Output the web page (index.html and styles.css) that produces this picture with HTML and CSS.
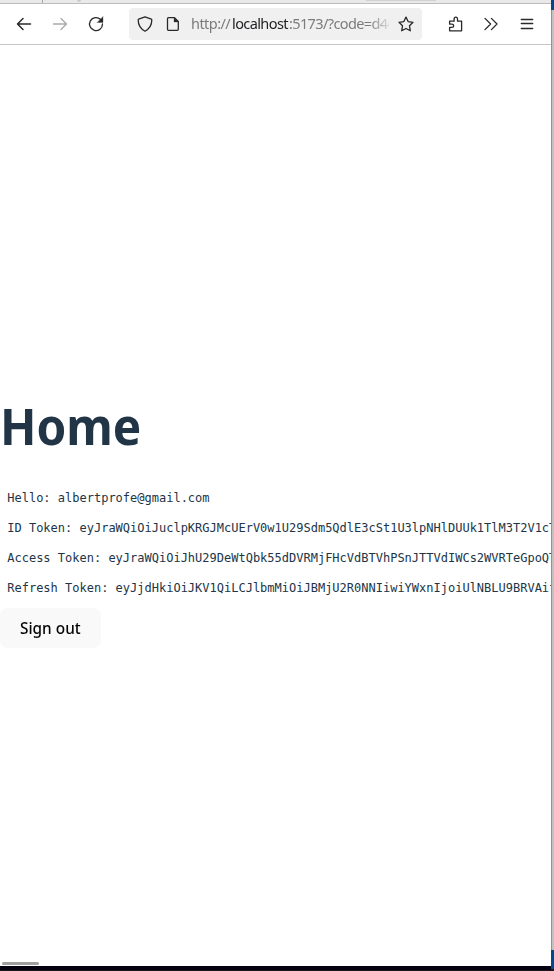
FILE: index.html
```html
<!DOCTYPE html>
<html lang="en">
<head>
<meta charset="utf-8">
<title>Home</title>
<link rel="stylesheet" href="styles.css">
</head>
<body>
<div class="desktop">
  <div class="window">
    <div class="tabs"><i class="tab-divider"></i><i class="tab-mark"></i><i class="tab-button"></i></div>
    <header class="toolbar">
      <svg class="icon back" viewBox="0 0 16 16"><path d="M14.500 8H1.500M7 2.500 1.500 8 7 13.500"/></svg>
      <svg class="icon forward" viewBox="0 0 16 16"><path d="M1.500 8h13M9 2.500 14.500 8 9 13.500"/></svg>
      <svg class="icon reload" viewBox="0 0 16 16"><path d="M12.600 3.500A6.500 6.500 0 1 0 14.500 8"/><path class="solid" d="M15 .8v5.700H9.300z"/></svg>
      <div class="address">
        <svg class="icon shield" viewBox="0 0 16 16"><path d="M8 .9 14.300 3.200q.5.200.5.800C14.800 9 12 13 8 15.200 4 13 1.200 9 1.200 4q0-.6.500-.8z"/></svg>
        <svg class="icon page" viewBox="0 0 16 16"><path d="M3.500 1.700h6L13.300 5.500v7.800q0 1-1 1H3.500q-1 0-1-1V2.700q0-1 1-1z"/><path class="solid" d="M9 1.500V6h4.500z"/></svg>
        <div class="url"><span class="scheme">http://</span><span class="host">localhost</span><span class="path">:5173/?code=d4c</span></div>
        <svg class="icon star" viewBox="0 0 16 16"><path d="m8 1.100 2.100 4.500 4.900.7-3.500 3.500.8 5L8 12.500l-4.300 2.300.8-5L1 6.300l4.900-.7z"/></svg>
      </div>
      <svg class="icon extensions" viewBox="0 0 16 16"><path d="M1.600 14.800h12V5.200H9.500V3.100q0-2-1.700-2T6.100 3.100v2.100H1.600v2.900h2.200q1.900 0 1.900 1.600t-1.900 1.700H1.600z"/></svg>
      <svg class="icon more" viewBox="0 0 16 16"><path d="M2 2.400 7.600 8 2 13.600M8.400 2.400 14 8l-5.600 5.600"/></svg>
      <svg class="icon menu" viewBox="0 0 16 16"><path d="M2.300 3.500h11.400M2.300 7.500h11.400M2.300 12.500h11.400"/></svg>
    </header>
    <main class="content">
      <h1><span>Home</span></h1>
      <pre>Hello: albertprofe@gmail.com</pre>
      <pre>ID Token: eyJraWQiOiJuclpKRGJMcUErV0w1U29Sdm5QdlE3cSt1U3lpNHlDUUk1TlM3T2V1cT</pre>
      <pre>Access Token: eyJraWQiOiJhU29DeWtQbk55dDVRMjFHcVdBTVhPSnJTTVdIWCs2WVRTeGpoQT</pre>
      <pre>Refresh Token: eyJjdHkiOiJKV1QiLCJlbmMiOiJBMjU2R0NNIiwiYWxnIjoiUlNBLU9BRVAif</pre>
      <button type="button"><span>Sign out</span></button>
    </main>
    <div class="scrollbar"></div>
    <div class="bottom"></div>
  </div>
  <aside class="edge"></aside>
</div>
</body>
</html>
```
FILE: styles.css
```css
* { box-sizing: border-box; }
body { margin: 0; width: 554px; height: 971px; overflow: hidden; background: #fff; font-family: "Noto Sans", sans-serif; }
.desktop { display: flex; height: 971px; }
.window { width: 551px; height: 971px; display: flex; flex-direction: column; overflow: hidden; }
.edge { width: 3px; background: linear-gradient(#00498f 0 10px, transparent 10px 950px, #004a90 950px 969px, #17171c 969px), linear-gradient(90deg, #929292 1px, #c2c2c2 1px); }
.tabs { height: 4px; display: flex; flex: none; background: #e9e9e9; border-bottom: 1px solid #bdbdbd; }
.tab-divider { width: 1px; height: 3px; margin-left: 42px; background: #aaa; }
.tab-mark { width: 4px; height: 2px; margin-left: 34px; background: #ccc; border-radius: 0 0 2px 2px; }
.tab-button { width: 70px; height: 1px; margin-left: 285px; background: #d1d1d1; }
.toolbar { height: 41px; flex: none; display: flex; align-items: center; border-bottom: 1px solid #c6c6c6; padding-left: 16px; }
.icon { width: 16px; height: 16px; flex: none; fill: none; stroke: #29292d; stroke-width: 1.3; stroke-linecap: round; stroke-linejoin: round; }
.icon .solid { fill: #29292d; stroke-width: .3; }
.back { stroke-width: 1.5; }
.forward { stroke: #aaa; margin-left: 20px; }
.reload { margin-left: 20px; }
.address { width: 293px; height: 32px; margin-left: 25px; padding-left: 8px; border-radius: 4px; background: #f0f0f0; display: flex; align-items: center; }
.page { margin-left: 12px; }
.url { width: 198px; height: 24px; margin-left: 10px; display: flex; white-space: nowrap; overflow: hidden; font-size: 14.500px; line-height: 22px; color: #7c7c7c; -webkit-mask-image: linear-gradient(90deg, #000 178px, transparent 202px); mask-image: linear-gradient(90deg, #000 178px, transparent 202px); }
.scheme { width: 41px; letter-spacing: -.55px; flex: none; }
.host { width: 57px; letter-spacing: -.6px; color: #222226; flex: none; }
.path { letter-spacing: -.62px; }
.star { margin-left: 9px; }
.extensions { margin-left: 26px; }
.more { margin-left: 19px; }
.menu { margin-left: 20px; }
.content { flex: 1; min-height: 0; padding-top: 353px; color: #213547; overflow: hidden; }
h1 { height: 56px; margin: 0 0 35px; font-size: 50.500px; line-height: 56px; font-weight: 700; }
h1 span { display: inline-block; transform: scaleX(.945); transform-origin: left; }
pre { height: 30px; margin: 0; padding-left: 7.250px; font: 12px/18px "DejaVu Sans Mono", monospace; }
button { display: block; width: 101px; height: 40px; margin-top: -1px; border: 0; border-radius: 8px; padding: 0 0 0 20px; background: #f9f9f9; color: #050505; text-align: left; font: 500 16px/24px "Noto Sans", sans-serif; }
button span { display: inline-block; transform: scaleX(.96); transform-origin: left; }
.scrollbar { width: 37px; height: 3px; flex: none; margin: 0 0 1px 2px; border-radius: 2px; background: #a0a0a0; }
.bottom { height: 5px; flex: none; background: linear-gradient(#05000f 4px, #17171c 4px); }
```
